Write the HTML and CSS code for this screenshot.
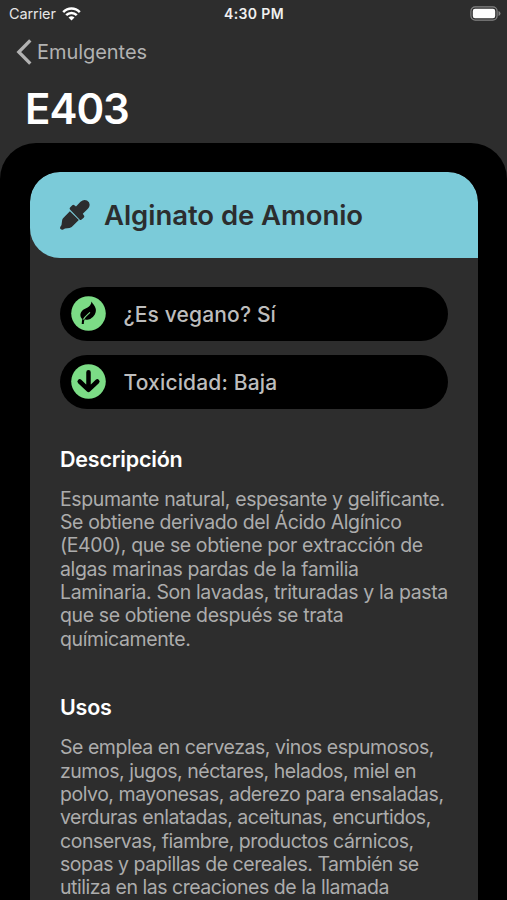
FILE: index.html
```html
<!DOCTYPE html>
<html lang="es">
<head>
<meta charset="utf-8">
<title>E403</title>
<link rel="stylesheet" href="styles.css">
</head>
<body>
<div class="screen">
  <div class="status">
    <div class="status-left"><span class="carrier">Carrier</span>
      <svg class="wifi" viewBox="0 0 19 14" width="19" height="14" fill="none" stroke="#fff" stroke-width="2.5"><path d="M1.2 5.2C6 .3 13 .3 17.8 5.2M4.2 8.2c3-3 7.600-3 10.600 0"/><path d="M9.500 13.600L6.500 10.600q3-2.500 6 0z" fill="#fff" stroke="none"/></svg>
    </div>
    <span class="clock">4:30 PM</span>
    <svg class="battery" viewBox="0 0 31 15" width="31" height="15"><rect x=".9" y=".9" width="26.200" height="13.200" rx="4.300" fill="none" stroke="#858585" stroke-width="1.200"/><rect x="2.800" y="2.800" width="22.400" height="9.400" rx="2.200" fill="#fff"/><path d="M28.500 5v5q2-.8 2-2.500T28.500 5z" fill="#858585"/></svg>
  </div>
  <nav class="back">
    <svg viewBox="0 0 16 26" width="16" height="26" fill="none" stroke="#b2b2b2" stroke-width="3.300"><path d="M14.300 1.300L2.800 13l11.500 11.700"/></svg>
    <span class="back-label">Emulgentes</span>
  </nav>
  <h1>E403</h1>
  <main class="panel">
    <article class="card">
      <header class="card-head">
        <svg class="dropper" viewBox="0 0 30 30" width="30" height="30" fill="#2c2d2e"><path d="M10.300 7.200l2-2q1-.8 2.100.1l1.600 1.100 4.500-4.600Q23.800-1 27 .6q3.400 1.900 2.400 5.600-.4 1.500-2 3L22.800 13.800l1.200 1.800q.7 1-.1 2l-2.200 2q-1.200.9-2.200-.1L10.200 9.700q-1.200-1.300.1-2.500z"/><path d="M9.900 11.200l8.900 8.900-7.100 6.900q-.9.8-2.200.9l-4.500.6-1.800 1.100q-1.600.7-2.600-.5-.9-1-.2-2.300l1.100-1.800.6-4.600q.2-1.400 1.200-2.300z"/></svg>
        <h2>Alginato de Amonio</h2>
      </header>
      <div class="card-body">
        <div class="pill">
          <svg viewBox="0 0 35 35" width="35" height="35"><circle cx="17.500" cy="17.500" r="17.300" fill="#7cdc86"/><path d="M20.600 5.500c.8 2.300 3.600 4.100 4.200 7.600.6 4-1.800 7.800-5.200 9.600-2 1.100-4.100 1-6.100.9q-.6 2-.7 4.500h-2.100q.1-3 .7-5C8.800 20.700 8.800 17.300 11 14.900c3-3.200 8.800-3 9.600-9.400z" fill="#000"/><path d="M12.400 23.600c1.500-3.300 3.900-4.700 6.600-7.200" fill="none" stroke="#7cdc86" stroke-width="1.100"/></svg>
          <span class="pill-text">¿Es vegano? Sí</span>
        </div>
        <div class="pill">
          <svg viewBox="0 0 35 35" width="35" height="35"><circle cx="17.500" cy="17.500" r="17.300" fill="#7cdc86"/><path d="M17.500 8.200v17M8.700 17.500l8.800 8.300 8.800-8.300" fill="none" stroke="#000" stroke-width="4.500" stroke-linecap="round" stroke-linejoin="round"/></svg>
          <span class="pill-text">Toxicidad: Baja</span>
        </div>
        <h3 class="h-desc">Descripción</h3>
        <p>Espumante natural, espesante y gelificante.<br>Se obtiene derivado del Ácido Algínico<br>(E400), que se obtiene por extracción de<br>algas marinas pardas de la familia<br>Laminaria. Son lavadas, trituradas y la pasta<br>que se obtiene después se trata<br>químicamente.</p>
        <h3 class="h-usos">Usos</h3>
        <p class="uses">Se emplea en cervezas, vinos espumosos,<br>zumos, jugos, néctares, helados, miel en<br>polvo, mayonesas, aderezo para ensaladas,<br>verduras enlatadas, aceitunas, encurtidos,<br>conservas, fiambre, productos cárnicos,<br>sopas y papillas de cereales. También se<br>utiliza en las creaciones de la llamada</p>
      </div>
    </article>
  </main>
</div>
</body>
</html>
```
FILE: styles.css
```css
* { box-sizing: border-box; margin: 0; padding: 0; }
body { background: #2d2d2d; font-family: Inter, "Liberation Sans", sans-serif; color: #fff; }
svg { display: block; flex: none; }
.screen { height: 900px; overflow: hidden; display: flex; flex-direction: column; }
.status { height: 27px; padding: 0 6px 0 9px; display: grid; grid-template-columns: 1fr auto 1fr; align-items: center; }
.status-left { display: flex; align-items: center; gap: 6px; color: #e6e6e6; }
.carrier { font-size: 14.5px; letter-spacing: -.1px; }
.clock { margin-right: 2px; font-size: 14px; font-weight: 600; letter-spacing: .35px; color: #f0f0f0; }
.battery { justify-self: end; }
.back { height: 50px; padding-left: 16px; display: flex; align-items: center; gap: 5px; color: #b2b2b2; }
.back-label { font-size: 20px; letter-spacing: -.05px; }
h1 { height: 66px; padding-left: 25px; line-height: 64px; font-size: 42px; font-weight: 600; letter-spacing: -1px; }
.panel { flex: 1; background: #000; border-radius: 36px 36px 0 0; padding: 29px 29.500px 0 30px; min-height: 0; }
.card { background: #2d2d2d; height: 100%; border-radius: 30px 30px 0 0; overflow: hidden; }
.card-head { height: 85.500px; background: #7bcbd9; border-radius: 30px 30px 0 30px; padding-left: 30px; display: flex; align-items: center; gap: 14px; color: #2c2d2e; }
h2 { padding-top: 1px; font-size: 27.500px; font-weight: 600; letter-spacing: -.05px; }
.card-body { padding: 29.500px 30px 0; white-space: nowrap; }
.pill { height: 53.500px; margin-bottom: 14.500px; border-radius: 27px; background: #000; display: flex; align-items: center; gap: 17px; padding-left: 11.500px; }
.pill svg { margin-left: -.5px; margin-right: .5px; }
.pill-text { padding-top: 1px; font-size: 21px; font-weight: 500; letter-spacing: .15px; color: #bdbdbd; }
h3 { font-size: 21.500px; font-weight: 600; letter-spacing: -.2px; line-height: 26px; }
.h-desc { margin-top: 37px; }
.h-usos { margin-top: 43.500px; }
p { margin-top: 16px; font-size: 19.500px; letter-spacing: -.39px; line-height: 23.350px; color: #acacac; }
.uses { letter-spacing: -.47px; }
```
